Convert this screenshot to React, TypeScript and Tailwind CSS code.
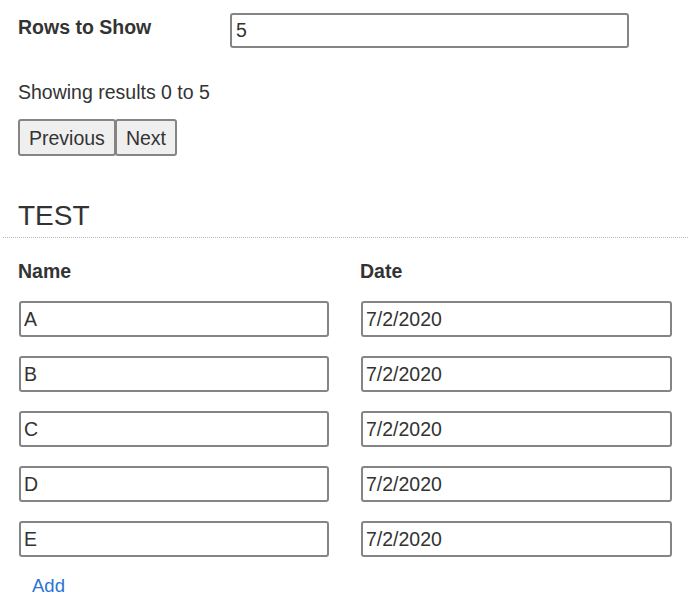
import { useState } from "react";

const rows = [
  { name: "A", date: "7/2/2020" },
  { name: "B", date: "7/2/2020" },
  { name: "C", date: "7/2/2020" },
  { name: "D", date: "7/2/2020" },
  { name: "E", date: "7/2/2020" },
];

const inputCls =
  "block h-[36px] w-full rounded-[3px] border-2 border-[#858585] bg-white px-[3px] text-[19.5px] text-[#333] outline-none";

export default function App() {
  const [count, setCount] = useState("5");

  return (
    <div
      className="min-h-[608px] w-[688px] bg-white leading-[22px] text-[#333]"
      style={{ fontFamily: '"Liberation Sans", Arial, sans-serif' }}
    >
      <div className="flex items-start pl-[18px] pt-[13px]">
        <label className="mt-[3px] w-[212px] text-[19.5px] font-bold">Rows to Show</label>
        <input
          value={count}
          onChange={(e) => setCount(e.target.value)}
          className="h-[35px] w-[399px] rounded-[3px] border-2 border-[#858585] bg-white px-[4px] text-[19.5px] text-[#333] outline-none"
        />
      </div>

      <p className="mt-[33px] pl-[18px] text-[19.5px]">Showing results 0 to {count}</p>

      <div className="mt-[16px] flex pl-[18px]">
        <button className="h-[37px] rounded-[3px] border-2 border-[#858585] bg-[#efefef] px-[9px] text-[19.5px] text-[#333]">
          Previous
        </button>
        <button className="-ml-[1px] h-[37px] rounded-[3px] border-2 border-[#858585] bg-[#efefef] px-[9px] text-[19.5px] text-[#333]">
          Next
        </button>
      </div>

      <div className="ml-[3px] mt-[44px] border-b border-dotted border-[#b8b8b8] pb-[5px] pl-[15px]">
        <h2 className="text-[28px] leading-[32px] text-[#333]">TEST</h2>
      </div>

      <div className="grid grid-cols-[312px_312px] gap-x-[30px] pl-[18px] pt-[22px]">
        <div className="text-[19.5px] font-bold">Name</div>
        <div className="text-[19.5px] font-bold">Date</div>
        {rows.map((r) => (
          <div key={r.name} className="contents">
            <div className="mt-[19px] pl-[1px] pr-[1px]">
              <input defaultValue={r.name} className={inputCls} />
            </div>
            <div className="mt-[19px] pl-[1px]">
              <input defaultValue={r.date} className={inputCls} />
            </div>
          </div>
        ))}
      </div>

      <a href="#" className="ml-[32px] mt-[18px] inline-block text-[18.5px] text-[#2a73d6]">
        Add
      </a>
    </div>
  );
}
